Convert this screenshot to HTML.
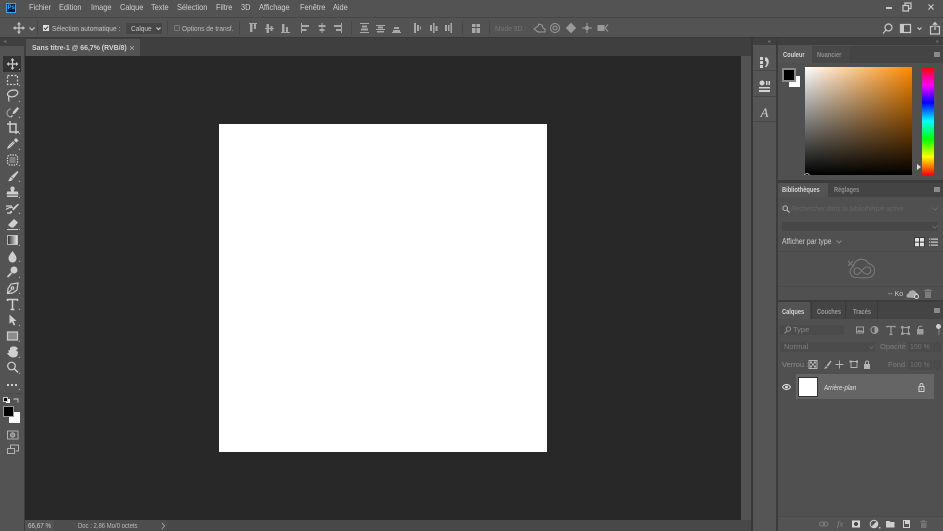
<!DOCTYPE html>
<html><head><meta charset="utf-8"><style>
*{box-sizing:border-box}
html,body{margin:0;padding:0;width:943px;height:531px;overflow:hidden;background:#535353}
body{position:relative;font-family:"Liberation Sans",sans-serif;color:#d0d0d0;filter:blur(.35px)}
.a{position:absolute}
.t{position:absolute;white-space:nowrap;line-height:1;transform-origin:left center}
svg{position:absolute;overflow:visible}
.m{font-size:8.2px;top:3.5px;color:#cfcfcf;transform:scaleX(.9)}
.o{font-size:7.5px;top:24.5px;transform:scaleX(.87)}
.tab{font-size:7.5px;font-weight:bold;transform:scaleX(.76)}
.s{fill:none;stroke:#c8c8c8;stroke-width:1.2}
.f{fill:#c8c8c8}
.ham{left:934px;width:6px;height:5px;background:#8a8a8a}
</style></head><body>
<!-- bars -->
<div class="a" style="left:0;top:0;width:943px;height:17px;background:#535353"></div>
<div class="a" style="left:0;top:17px;width:943px;height:1px;background:#474747"></div>
<div class="a" style="left:0;top:18px;width:943px;height:20px;background:#535353"></div>
<div class="a" style="left:0;top:37px;width:943px;height:1px;background:#3a3a3a"></div>
<!-- logo -->
<div class="a" style="left:6px;top:3px;width:10px;height:10px;background:#001e36;border:1px solid #31a8ff"></div>
<div class="t" style="left:7.5px;top:5px;font-size:6px;font-weight:bold;color:#31a8ff">Ps</div>
<!-- menu -->
<div class="t m" style="left:29px">Fichier</div>
<div class="t m" style="left:59px">Edition</div>
<div class="t m" style="left:91px">Image</div>
<div class="t m" style="left:120px">Calque</div>
<div class="t m" style="left:151px">Texte</div>
<div class="t m" style="left:177px">Sélection</div>
<div class="t m" style="left:216px">Filtre</div>
<div class="t m" style="left:241px">3D</div>
<div class="t m" style="left:259px">Affichage</div>
<div class="t m" style="left:300px">Fenêtre</div>
<div class="t m" style="left:333px">Aide</div>
<!-- window controls -->
<div class="a" style="left:886px;top:7px;width:6px;height:1.5px;background:#c8c8c8"></div>
<svg style="left:902px;top:2px" width="10" height="10"><path class="s" d="M1 3.500h5.500v5.500h-5.500zM3 3V1h6v5.500h-2.500"/></svg>
<svg style="left:927px;top:3px" width="8" height="8"><path class="s" d="M1.500 1.500l5 5M6.500 1.500l-5 5"/></svg>
<!-- options bar -->
<svg style="left:13px;top:22px" width="12" height="12"><path class="s" d="M6 .5v11M.5 6h11"/><path class="f" d="M6 0l2 2.500h-4zM6 12l2-2.500h-4zM0 6l2.500-2v4zM12 6l-2.500-2v4z"/></svg>
<svg style="left:29px;top:27px" width="6" height="4"><path class="s" stroke-width=".8" d="M.5 .5l2.500 2.500 2.500-2.500"/></svg>
<div class="a" style="left:37px;top:21px;width:1px;height:14px;background:#474747"></div>
<div class="a" style="left:43px;top:25px;width:6px;height:6px;background:#e0e0e0"></div>
<svg style="left:43px;top:25px" width="6" height="6"><path d="M1 3l1.500 1.500 2.500-3" fill="none" stroke="#444" stroke-width="1"/></svg>
<div class="t o" style="left:52px;color:#c4c4c4">Sélection automatique :</div>
<div class="a" style="left:126px;top:23px;width:36px;height:11px;background:#464646"></div>
<div class="t o" style="left:131px;color:#c8c8c8">Calque</div>
<svg style="left:156px;top:27px" width="6" height="4"><path class="s" stroke-width=".8" d="M.5 .5l2 2 2-2"/></svg>
<div class="a" style="left:167px;top:21px;width:1px;height:14px;background:#474747"></div>
<div class="a" style="left:174px;top:25px;width:6px;height:6px;border:1px solid #777;border-radius:1.500px"></div>
<div class="t o" style="left:182px;color:#bdbdbd">Options de transf.</div>
<div class="a" style="left:239px;top:21px;width:1px;height:14px;background:#474747"></div>
<!-- align icons -->
<svg style="left:248px;top:23px" width="100" height="11" fill="#a8a8a8">
<path d="M1 0h8v1h-8zM2 1h2.500v8h-2.500zM6 1h2v5h-2z"/>
<path d="M17 5h9v1h-9zM18.500 1h2.500v9h-2.500zM22.500 3h2v5h-2z"/>
<path d="M33 9h9v1h-9zM34 1h2.500v8h-2.500zM38 4h2v5h-2z"/>
<path d="M53 0h1v10h-1zM54 2h7v2h-7zM54 6h4.500v2h-4.500z"/>
<path d="M73.500 0h1v10h-1zM70.500 2h7v2h-7zM71.500 6h5v2h-5z"/>
<path d="M93 0h1v10h-1zM86 2h7v2h-7zM88 6h5v2h-5z"/>
</svg>
<div class="a" style="left:351px;top:21px;width:1px;height:14px;background:#474747"></div>
<svg style="left:359px;top:23px" width="125" height="11" fill="#a8a8a8">
<path d="M1 0h9v1h-9zM3 2.500h5v2h-5zM2 5.500h7v2h-7zM1 9h9v1h-9z"/>
<path d="M17 2h9v1h-9zM19 3.500h5v2h-5zM17 6h9v1h-9zM18 8h7v1.500h-7z"/>
<path d="M33 9h9v1h-9zM35 4h5v2h-5zM34 7h7v2h-7z"/>
<path d="M55 0h2v10h-2zM58 2h2v6h-2zM61 3.500h1v3h-1z"/>
<path d="M71 2h2v6h-2zM74 0h1.500v10h-1.500zM76.500 3h2v5h-2z"/>
<path d="M86 2h2v6h-2zM89 2h1.500v6h-1.500zM91.500 0h1.500v10h-1.500z"/>
<path d="M113 1h3.500v3h-3.500zM117.500 1h3.500v3h-3.500zM113 5h3.500v5h-3.500zM117.500 5h3.500v5h-3.500z"/>
</svg>
<div class="a" style="left:462px;top:21px;width:1px;height:14px;background:#474747"></div>
<div class="a" style="left:489px;top:21px;width:1px;height:14px;background:#474747"></div>
<div class="t o" style="left:495px;color:#757575;transform:scaleX(.9)">Mode 3D :</div>
<svg style="left:533px;top:22px" width="80" height="12" fill="none" stroke="#9a9a9a" stroke-width="1">
<path d="M1 7l4-3 1-2 3 1 1 3 2 1v3h-7z"/>
<circle cx="22" cy="6" r="4.500"/><circle cx="22" cy="6" r="2"/>
<path d="M38 1.500l4.500 4.500-4.500 4.500-4.500-4.500z" fill="#9a9a9a"/>
<path d="M54 1v10M49 6h10" /><circle cx="54" cy="6" r="1.500" fill="#9a9a9a"/>
<path d="M65 3.500h6v5h-6z" fill="#9a9a9a"/><path d="M75 2.500l-3 3.500 3 3.500"/>
</svg>
<!-- right options -->
<svg style="left:882px;top:23px" width="12" height="12"><circle class="s" cx="6.500" cy="4.500" r="3.500"/><path class="s" stroke-width="1.500" d="M4 7l-3 3.500"/></svg>
<svg style="left:900px;top:24px" width="12" height="10"><path class="s" d="M.5 .5h10v8h-10z"/><path class="f" d="M1 1h3v7h-3z"/></svg>
<svg style="left:917px;top:27px" width="6" height="4"><path class="s" stroke-width=".8" d="M.5 .5l2 2 2-2"/></svg>
<svg style="left:930px;top:22px" width="12" height="13"><path class="s" d="M3.500 4.500h-3v7.500h9v-7.500h-3M5 8v-7M2.800 3l2.200-2.500 2.200 2.500"/></svg>

<!-- left toolbar -->
<div class="a" style="left:0;top:38px;width:25px;height:493px;background:#535353;border-right:1px solid #3c3c3c"></div>
<div class="a" style="left:0;top:38px;width:25px;height:8px;background:#3f3f3f"></div>
<div class="t" style="left:4px;top:40px;font-size:5px;color:#aaa;letter-spacing:-.5px">«</div>
<div class="a" style="left:3px;top:56px;width:18px;height:16px;background:#333"></div>
<svg style="left:0;top:55px" width="25" height="405" stroke="#cfcfcf" fill="none" stroke-width="1.200">
<!-- move -->
<path d="M12.500 4v10M7.500 9h10"/><path fill="#cfcfcf" stroke="none" d="M12.500 3l2 2.500h-4zM12.500 15l2-2.500h-4zM6.500 9l2.500-2v4zM18.500 9l-2.500-2v4z"/>
<!-- marquee -->
<path stroke-dasharray="2 1.500" d="M7.500 20.500h10v9h-10z"/>
<!-- lasso -->
<g transform="translate(0,2)"><path d="M8 39c-2-4 3-6 6-6s5 2 3 4.500c-2 2.500-6 3-8 1.500M9 38.500c-1 2 0 4 0 6"/></g>
<!-- quick sel -->
<g transform="translate(0,4)"><path stroke="#999" d="M11 50a4 4 0 1 0 0 8"/><path fill="#cfcfcf" stroke="none" d="M17.500 48l1.500 1.500-4 5-2.500.8.700-2.800zM12 56l1 1-1.500 1.500-1-1z"/></g>
<!-- crop -->
<path stroke-width="1.400" d="M10 66v11h9M7 69h9v10"/>
<!-- eyedropper -->
<path fill="#cfcfcf" stroke="none" d="M16 83l2.500 2.500-2 2-1-.5-1-1-.5-1z"/><path d="M14.500 87.500l-5 5-1.500.5.500-1.500 5-5"/>
<!-- patch -->
<rect x="7.500" y="100" width="10" height="10" rx="2.500" stroke-dasharray="1.500 1" /><rect x="9.500" y="102" width="6" height="6" fill="#cfcfcf" fill-opacity=".35" stroke="none"/>
<!-- brush -->
<path fill="#cfcfcf" stroke="none" d="M17.500 116l1 1-5 6.500-2.500-2zM10.500 122l2.500 2c-1 2-3 2.500-5 2 1-.8 1.500-2.500 2.500-4z"/>
<!-- stamp -->
<path fill="#cfcfcf" stroke="none" d="M10.500 132.500a2.500 2.500 0 0 1 4 0c.5 1.500-.5 2.500-.7 4h4l.7 3h-12l.7-3h4c-.2-1.500-1.200-2.500-.7-4zM7 140.500h11v1.500h-11z"/>
<!-- history brush -->
<path d="M6 151h6M6 154.500c2-2 6-2.500 7-2M7 158h4"/><path fill="#cfcfcf" stroke="none" d="M18 148.500l1 1-5.500 6-1.500-1.500zM11 155.500l1.500 1.500c-1 1.500-3 2-4 1.500 1-.5 1.500-2 2.500-3z"/>
<!-- eraser -->
<path fill="#cfcfcf" stroke="none" d="M14 164l4 3.500-4.500 5h-2.500l-3-2.500z"/><path stroke-width="1" d="M7 174.500h11"/>
<!-- gradient -->
<defs><linearGradient id="g"><stop offset="0" stop-color="#2a2a2a"/><stop offset="1" stop-color="#eee"/></linearGradient></defs>
<rect x="7.500" y="180.500" width="10" height="9" fill="url(#g)" stroke="#cfcfcf" stroke-width=".8"/>
<!-- blur drop -->
<path fill="#cfcfcf" stroke="none" d="M12.500 196c2 3 4 5 4 7.500a4 4 0 0 1-8 0c0-2.500 2-4.500 4-7.500z"/>
<!-- dodge -->
<circle cx="14" cy="215" r="3.500" fill="#cfcfcf" stroke="none"/><path stroke-width="1.800" d="M11.500 218l-4 4"/>
<!-- pen -->
<g transform="translate(0,-1)"><path d="M18 229l-1 7-4.500 3-5 .5.500-5 3-4.500z"/><circle cx="12.500" cy="234" r="1.200"/><path d="M7.500 239.500l4-4"/></g>
<!-- type -->
<path stroke-width="1.500" d="M7.500 246v-1.500h10v1.500M12.500 244.500v10M10.500 254.500h4"/>
<!-- path sel -->
<path fill="#cfcfcf" stroke="none" d="M9.500 259.500l7 6.500h-3l1.800 3.800-1.500.7-1.800-3.800-2.500 2.200z"/>
<!-- rect -->
<rect x="7.500" y="277" width="10" height="8" fill="#8a8a8a" stroke="#cfcfcf"/>
<!-- hand (mixed shape) -->
<path fill="#cfcfcf" stroke="none" d="M10 293c2-2 5-2 7-.5l1 1.500-2 1 2 2-.5 3.500c-2 2.500-6 2.500-8 .5l-2.500-2.500 2-1-1-2 2-.5z"/>
<!-- zoom -->
<circle cx="11.500" cy="311" r="3.800"/><path stroke-width="1.500" d="M14.500 314l3.500 3.500"/>
</svg>
<div class="a" style="left:7px;top:384px;width:2px;height:2px;background:#cfcfcf;box-shadow:4px 0 #cfcfcf,8px 0 #cfcfcf"></div>
<div class="a" style="left:2px;top:393px;width:21px;height:1px;background:#4a4a4a"></div>
<div class="a" style="left:6px;top:399px;width:4px;height:4px;background:#fff"></div>
<div class="a" style="left:3px;top:397px;width:5px;height:5px;background:#000;border:1px solid #ccc"></div>
<svg style="left:13px;top:397px" width="7" height="6"><path d="M.5 2h4.500v3.500" fill="none" stroke="#cfcfcf" stroke-width=".9"/></svg>
<div class="a" style="left:9px;top:412px;width:11px;height:11px;background:#fff"></div>
<div class="a" style="left:3px;top:406px;width:11px;height:11px;background:#000;border:1px solid #999"></div>
<svg style="left:7px;top:430px" width="12" height="26" fill="none" stroke="#b0b0b0">
<path d="M.5 1h10.500v8h-10.500z"/><circle cx="5.700" cy="5" r="2.200" fill="#8a8a8a"/>
<path d="M3.500 18v-3h8v6h-3M.5 18.500h7v5h-7z"/>
</svg>
<!-- tool corner tick marks -->
<svg style="left:0;top:0" width="25" height="460" fill="#bbb">
<path d="M20 70h-1.500l1.500-1.500zM20 86h-1.500l1.500-1.500zM20 102h-1.500l1.500-1.500zM20 118h-1.500l1.500-1.500zM20 134h-1.500l1.500-1.500zM20 150h-1.500l1.500-1.500zM20 166h-1.500l1.500-1.500zM20 182h-1.500l1.500-1.500zM20 198h-1.500l1.500-1.500zM20 214h-1.500l1.500-1.500zM20 230h-1.500l1.500-1.500zM20 246h-1.500l1.500-1.500zM20 262h-1.500l1.500-1.500zM20 278h-1.500l1.500-1.500zM20 294h-1.500l1.500-1.500zM20 310h-1.500l1.500-1.500zM20 326h-1.500l1.500-1.500zM20 342h-1.500l1.500-1.500zM20 358h-1.500l1.500-1.500zM20 374h-1.500l1.500-1.500zM20 390h-1.500l1.500-1.500z"/>
</svg>

<!-- doc area -->
<div class="a" style="left:25px;top:38px;width:727px;height:18px;background:#3f3f3f"></div>
<div class="a" style="left:26px;top:39px;width:114px;height:17px;background:#535353"></div>
<div class="t" style="left:31.500px;top:44px;font-size:7.700px;font-weight:bold;color:#d4d4d4;transform:scaleX(.9)">Sans titre-1 @ 66,7% (RVB/8)</div>
<svg style="left:129px;top:45px" width="6" height="6"><path d="M1 1l4 4M5 1l-4 4" stroke="#aaa" stroke-width=".8"/></svg>
<div class="a" style="left:25px;top:56px;width:716px;height:464px;background:#282828"></div>
<div class="a" style="left:219px;top:124px;width:328px;height:328px;background:#fff"></div>
<div class="a" style="left:741px;top:56px;width:10px;height:475px;background:#535353"></div>
<div class="a" style="left:25px;top:520px;width:727px;height:11px;background:#484848"></div>
<div class="a" style="left:25px;top:520px;width:29px;height:11px;background:#535353"></div>
<div class="a" style="left:54px;top:520px;width:113px;height:11px;background:#4d4d4d"></div>
<div class="t" style="left:28px;top:522.500px;font-size:7px;color:#c8c8c8;transform:scaleX(.9)">66,67 %</div>
<div class="t" style="left:78px;top:522.500px;font-size:7px;color:#bcbcbc;transform:scaleX(.85)">Doc : 2,86 Mo/0 octets</div>
<svg style="left:161px;top:522px" width="5" height="8"><path d="M1 1l2.500 3-2.500 3" fill="none" stroke="#aaa" stroke-width=".8"/></svg>

<!-- separators -->
<div class="a" style="left:751px;top:38px;width:2px;height:493px;background:#383838"></div>
<!-- icon dock -->
<div class="a" style="left:753px;top:38px;width:24px;height:493px;background:#555"></div>
<div class="a" style="left:753px;top:38px;width:190px;height:7px;background:#3f3f3f"></div>
<div class="a" style="left:776px;top:38px;width:2px;height:493px;background:#3c3c3c"></div>
<div class="t" style="left:768px;top:40px;font-size:5px;color:#aaa;letter-spacing:-.5px">«</div>
<div class="t" style="left:936px;top:40px;font-size:5px;color:#aaa;letter-spacing:-.5px">»</div>
<div class="a" style="left:753px;top:46px;width:23px;height:25px;border-bottom:1px solid #474747"></div>
<div class="a" style="left:753px;top:71px;width:23px;height:26px;border-bottom:1px solid #474747"></div>
<div class="a" style="left:753px;top:97px;width:23px;height:25px;border-bottom:1px solid #474747"></div>
<svg style="left:759px;top:56px" width="12" height="70" fill="#d2d2d2" stroke="none">
<path d="M1 1h3v3h-3zM1 5h3v3h-3zM1 9h3v3h-3z"/><path d="M6 1.500h2c2 2 3 6-1 10l-1-1c2-2 2-4 1-5.500h-1z"/>
<circle cx="3" cy="27" r="2.500"/><path d="M7 25h1.500v4h-1.500zM9.500 25h1.500v4h-1.500zM0 31h11v1.500h-11zM0 34h11v2h-11z"/>
<text x="1.500" y="61" font-family="Liberation Serif" font-style="italic" font-size="13" fill="#cfcfcf">A</text>
</svg>

<!-- right panels background -->
<div class="a" style="left:778px;top:45px;width:165px;height:486px;background:#505050"></div>
<!-- color panel -->
<div class="a" style="left:778px;top:46px;width:165px;height:17px;background:#444"></div>
<div class="a" style="left:778px;top:46px;width:34px;height:17px;background:#535353"></div>
<div class="a" style="left:812px;top:46px;width:38px;height:17px;background:#484848"></div>
<div class="t tab" style="left:783px;top:51px;color:#d6d6d6">Couleur</div>
<div class="t tab" style="left:817px;top:51px;color:#8e8e8e">Nuancier</div>
<div class="a ham" style="top:52px"></div>
<div class="a" style="left:789px;top:76px;width:11px;height:11px;background:#fff"></div>
<div class="a" style="left:782px;top:68px;width:14px;height:14px;background:#000;border:2px solid #8a8a8a"></div>
<div class="a" style="left:805px;top:67px;width:107px;height:108px;background:linear-gradient(to bottom,rgba(0,0,0,0),#000),linear-gradient(to right,#fff,#ff8a00)"></div>
<div class="a" style="left:922px;top:67px;width:12px;height:108px;background:linear-gradient(to bottom,#ff0000,#ff00ff 17%,#0000ff 33%,#00ffff 50%,#00ff00 67%,#ffff00 83%,#ff0000)"></div>
<svg style="left:917px;top:164px" width="4" height="6"><path d="M0 0l4 3-4 3z" fill="#ddd"/></svg>
<svg style="left:804px;top:170px" width="6" height="6"><path d="M.5 5a3 3 0 0 1 5 0" fill="none" stroke="#ddd" stroke-width=".8"/></svg>
<div class="a" style="left:778px;top:180px;width:165px;height:3px;background:#3c3c3c"></div>

<!-- libraries -->
<div class="a" style="left:778px;top:183px;width:165px;height:14px;background:#444"></div>
<div class="a" style="left:778px;top:183px;width:50px;height:14px;background:#535353"></div>
<div class="t tab" style="left:782px;top:186px;color:#d6d6d6">Bibliothèques</div>
<div class="t tab" style="left:834px;top:186px;color:#8e8e8e">Réglages</div>
<div class="a ham" style="top:187px"></div>
<svg style="left:782px;top:205px" width="8" height="8"><circle cx="3.200" cy="3.200" r="2.300" fill="none" stroke="#bbb" stroke-width="1"/><path d="M5 5l2.500 2.500" stroke="#bbb" stroke-width="1.200"/></svg>
<div class="t" style="left:791px;top:205px;font-size:7.500px;font-style:italic;color:#666;transform:scaleX(.87)">Rechercher dans la bibliothèque active</div>
<svg style="left:932px;top:207px" width="6" height="4"><path d="M.5 .5l2.500 2.500 2.500-2.500" fill="none" stroke="#6e6e6e" stroke-width=".8"/></svg>
<div class="a" style="left:782px;top:222px;width:156px;height:9px;background:#474747"></div>
<svg style="left:932px;top:225px" width="6" height="4"><path d="M.5 .5l2.500 2.500 2.500-2.500" fill="none" stroke="#6e6e6e" stroke-width=".8"/></svg>
<div class="t" style="left:782px;top:237.500px;font-size:8px;color:#cfcfcf;transform:scaleX(.85)">Afficher par type</div>
<svg style="left:836px;top:240px" width="6" height="4"><path d="M.5 .5l2.500 2.500 2.500-2.500" fill="none" stroke="#999" stroke-width=".8"/></svg>
<div class="a" style="left:914px;top:237px;width:11px;height:10px;background:#3a3a3a"></div>
<svg style="left:915px;top:238px" width="24" height="9" fill="#e0e0e0"><path d="M0 0h4v3.600h-4zM5 0h4v3.600h-4zM0 4.600h4v3.600h-4zM5 4.600h4v3.600h-4z"/><path fill="#c8c8c8" d="M14 .5h1.300v1.300h-1.300zM16 .5h7v1.300h-7zM14 3.500h1.300v1.300h-1.300zM16 3.500h7v1.300h-7zM14 6.500h1.300v1.300h-1.300zM16 6.500h7v1.300h-7z"/></svg>
<div class="a" style="left:778px;top:251px;width:165px;height:1px;background:#4a4a4a"></div>
<svg style="left:846px;top:259px" width="30" height="22" fill="none" stroke="#797979" stroke-width="1.100">
<path d="M2 2l5 5M7 2l-5 5"/>
<path d="M9 18.500a5.800 5.800 0 0 1-1.500-11a8 8 0 0 1 15-3a7.200 7.200 0 0 1 1 14c-2 .5-4 .5-14.500 0z"/>
<path d="M10.500 15.500a3.500 3.500 0 0 1-.5-6.500c3-1 5 2 7 4s4 3 6 1.500a3.500 3.500 0 0 0-1-6.500c-3-.5-5 2-7 4.500-1.500 2-3 3-4.500 3z"/>
</svg>
<div class="a" style="left:778px;top:286px;width:165px;height:1px;background:#4a4a4a"></div>
<div class="t" style="left:888px;top:291px;font-size:7px;color:#c8c8c8">-- Ko</div>
<svg style="left:907px;top:289px" width="13" height="10"><path d="M0 8.500a2.500 2.500 0 0 1 1.500-4 4 4 0 0 1 7.500-1 3 3 0 0 1 2 3l-2 2.500z" fill="#aaa"/><circle cx="9.500" cy="7.500" r="2" fill="#535353" stroke="#ddd"/></svg>
<svg style="left:924px;top:289px" width="8" height="9" fill="#7d7d7d"><path d="M0 1h8v1h-8zM2.500 0h3v1h-3zM1 2.500h6v6.500h-6z"/></svg>
<div class="a" style="left:778px;top:300px;width:165px;height:2px;background:#3c3c3c"></div>

<!-- layers -->
<div class="a" style="left:778px;top:302px;width:165px;height:17px;background:#444"></div>
<div class="a" style="left:778px;top:302px;width:32px;height:17px;background:#535353"></div>
<div class="a" style="left:811px;top:302px;width:35px;height:17px;border-right:1px solid #3a3a3a;border-left:1px solid #3a3a3a"></div>
<div class="a" style="left:846px;top:302px;width:32px;height:17px;border-right:1px solid #3a3a3a"></div>
<div class="t tab" style="left:782px;top:307.500px;color:#d6d6d6">Calques</div>
<div class="t tab" style="left:817px;top:307.500px;color:#9a9a9a">Couches</div>
<div class="t tab" style="left:853px;top:307.500px;color:#9a9a9a">Tracés</div>
<div class="a ham" style="top:308px"></div>
<div class="a" style="left:780px;top:325px;width:64px;height:10px;background:#4b4b4b"></div>
<svg style="left:784px;top:326px" width="8" height="8"><circle cx="4.500" cy="3" r="2.200" fill="none" stroke="#999" stroke-width=".9"/><path d="M3 5l-2.500 2.500" stroke="#999"/></svg>
<div class="t" style="left:793px;top:326px;font-size:7.500px;color:#858585">Type</div>
<svg style="left:856px;top:325px" width="85" height="11" fill="#9e9e9e" stroke="#9e9e9e">
<path fill="none" stroke-width="1" d="M.5 2h7v6h-7z"/><path stroke="none" d="M1 7l2-2.500 1.500 1.500 1-1 2 2z"/>
<circle cx="18.500" cy="5" r="3.500" fill="none"/><path stroke="none" d="M18.500 1.500a3.500 3.500 0 0 1 0 7z"/>
<path fill="none" stroke-width="1.300" d="M31 2.500v-1h8v1M35 1.500v8M33.500 9.500h3"/>
<path fill="none" d="M46.500 2.500h6v6h-6z"/><path stroke="none" d="M45 1h2.500v2.500h-2.500zM51.500 1h2.500v2.500h-2.500zM45 7.500h2.500v2.500h-2.500zM51.500 7.500h2.500v2.500h-2.500z"/>
<path stroke="none" d="M61 4h6.500v5.500h-6.500z"/><path fill="none" d="M62.500 4v-1.500a2 2 0 0 1 3.500-.5"/>
</svg>
<div class="a" style="left:936px;top:324px;width:5px;height:5px;border-radius:3px;background:#cfcfcf"></div>
<div class="a" style="left:937.500px;top:329px;width:2px;height:6px;background:#6a6a6a"></div>
<div class="a" style="left:780px;top:342px;width:95px;height:10px;background:#4b4b4b"></div>
<div class="t" style="left:784px;top:343px;font-size:7.500px;color:#7d7d7d">Normal</div>
<svg style="left:869px;top:346px" width="6" height="4"><path d="M.5 .5l2 2 2-2" fill="none" stroke="#6e6e6e" stroke-width=".8"/></svg>
<div class="t" style="left:880px;top:343px;font-size:7.500px;color:#7d7d7d">Opacité :</div>
<div class="a" style="left:908px;top:342px;width:24px;height:10px;background:#4b4b4b"></div>
<div class="t" style="left:910px;top:343.500px;font-size:7px;color:#747474">100 %</div>
<div class="a" style="left:933px;top:342px;width:8px;height:10px;background:#4b4b4b"></div>
<div class="t" style="left:782px;top:361px;font-size:7.500px;color:#8a8a8a">Verrou :</div>
<svg style="left:809px;top:360px" width="64" height="10" fill="#b4b4b4">
<path d="M0 .5h8v8h-8z" fill="none" stroke="#b4b4b4"/><path d="M1 1.500h2v2h-2zM5 1.500h2v2h-2zM3 3.500h2v2h-2zM1 5.500h2v2h-2zM5 5.500h2v2h-2z"/>
<path d="M21.500 .5l1 1-3.500 5-1.500-1zM17 6l1.500 1.500c-.8 1-2 1.300-3.500 1 .8-.5 1.200-1.500 2-2.500z"/>
<path d="M30.500 .5v8M26.500 4.500h8" stroke="#b4b4b4" fill="none" stroke-width=".9"/>
<path d="M42 1.500h6v6h-6z" fill="none" stroke="#b4b4b4" stroke-width=".9"/><path d="M40.500 .5h2.500v2h-2.500zM47 .5h2v2h-2z"/>
<path d="M55 4h6v5h-6z"/><path d="M56.500 4v-1.500a1.500 1.500 0 0 1 3 0v1.500" fill="none" stroke="#b4b4b4"/>
</svg>
<div class="t" style="left:888px;top:360.500px;font-size:7.500px;color:#7d7d7d">Fond :</div>
<div class="a" style="left:908px;top:360px;width:24px;height:10px;background:#4b4b4b"></div>
<div class="t" style="left:910px;top:361.500px;font-size:7px;color:#747474">100 %</div>
<div class="a" style="left:933px;top:360px;width:8px;height:10px;background:#4b4b4b"></div>
<div class="a" style="left:796px;top:374px;width:138px;height:25px;background:#656565"></div>
<div class="a" style="left:798px;top:377px;width:20px;height:20px;background:#fff;border:1px solid #333"></div>
<svg style="left:782px;top:384px" width="9" height="6"><path d="M.5 3c2-3.300 6-3.300 8 0-2 3.300-6 3.300-8 0z" fill="none" stroke="#e4e4e4"/><circle cx="4.500" cy="3" r="1.400" fill="#e4e4e4"/></svg>
<div class="t" style="left:824px;top:384px;font-size:7.700px;font-style:italic;color:#e0e0e0;transform:scaleX(.8)">Arrière-plan</div>
<svg style="left:918px;top:383px" width="7" height="9"><path d="M1 3.500h5v5h-5z" fill="none" stroke="#d0d0d0"/><path d="M2 3.500v-1.500a1.500 1.500 0 0 1 3 0v1.500" fill="none" stroke="#d0d0d0" stroke-width=".9"/><circle cx="3.500" cy="6" r=".8" fill="#d0d0d0"/></svg>
<!-- bottom bar -->
<div class="a" style="left:778px;top:516px;width:165px;height:15px;background:#535353;border-top:1px solid #4a4a4a"></div>
<svg style="left:819px;top:518.500px" width="112" height="10">
<g fill="none" stroke="#7c7c7c"><rect x=".5" y="3" width="5" height="4" rx="2"/><rect x="4" y="3" width="5" height="4" rx="2"/></g>
<text x="18" y="7.500" font-family="Liberation Serif" font-style="italic" font-size="8.500" fill="#888">fx</text>
<path d="M33 1.500h8v7h-8z" fill="#d8d8d8"/><circle cx="37" cy="5" r="2" fill="#444"/>
<circle cx="55" cy="5" r="3.800" fill="none" stroke="#d0d0d0"/><path d="M52.500 7.500l5-5a3.500 3.500 0 0 1-5 5z" fill="#d0d0d0"/><path d="M60 8h1.500v1.500h-1.500z" fill="#ccc"/>
<path d="M67 2h3.500l1 1h4v5.500h-8.500z" fill="#d0d0d0"/>
<path d="M84.500 1.500h6v7h-6z" fill="none" stroke="#d0d0d0"/><path d="M86 1.500h4.500v3.500h-4.500z" fill="#d0d0d0"/>
<path d="M101 2h7v1h-7zM103 1h3v1h-3zM102 3.500h5.500v5.500h-5.500z" fill="#737373"/>
</svg>
</body></html>
